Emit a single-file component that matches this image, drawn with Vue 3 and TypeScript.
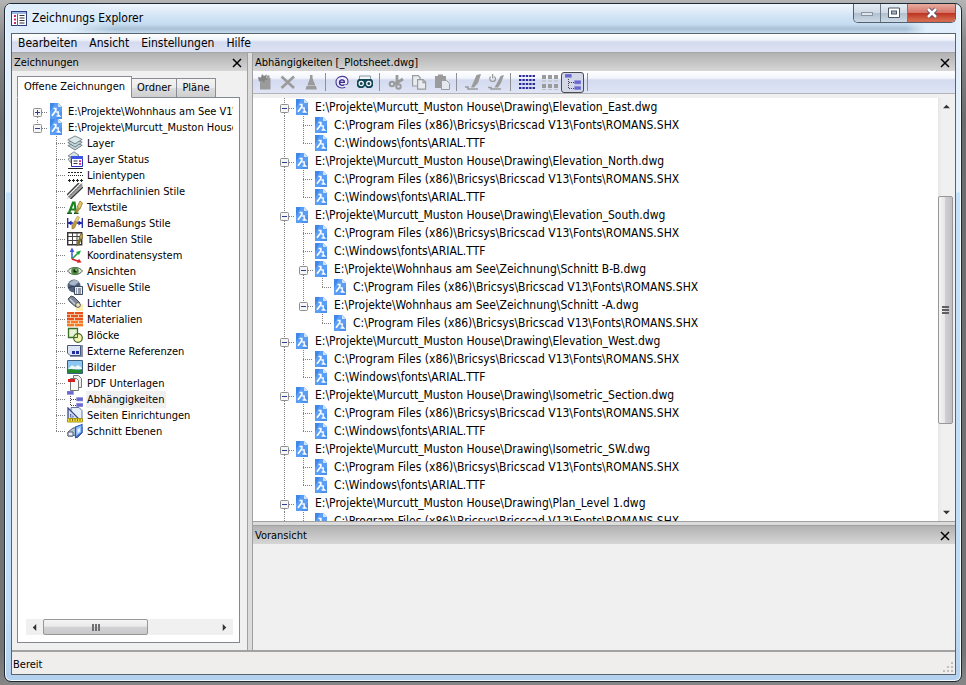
<script setup lang="ts">
type Cell = 'none' | 'line' | 'tee' | 'elbow' | 'box' | 'boxLast' | 'plusTop'

interface Row {
  text: string
  cells: Cell[]
  icon: string
  selected?: boolean
}

interface Tool {
  icon: string
  label: string
}

const menus: string[] = ['Bearbeiten', 'Ansicht', 'Einstellungen', 'Hilfe']
const tabs: string[] = ['Offene Zeichnungen', 'Ordner', 'Pläne']

const categories: [string, string][] = [
  ['Layer', 'layer'],
  ['Layer Status', 'layerState'],
  ['Linientypen', 'linetype'],
  ['Mehrfachlinien Stile', 'multiline'],
  ['Textstile', 'textstyle'],
  ['Bemaßungs Stile', 'dimension'],
  ['Tabellen Stile', 'table'],
  ['Koordinatensystem', 'ucs'],
  ['Ansichten', 'eye'],
  ['Visuelle Stile', 'visual'],
  ['Lichter', 'light'],
  ['Materialien', 'material'],
  ['Blöcke', 'block'],
  ['Externe Referenzen', 'xref'],
  ['Bilder', 'image'],
  ['PDF Unterlagen', 'pdf'],
  ['Abhängigkeiten', 'deps'],
  ['Seiten Einrichtungen', 'page'],
  ['Schnitt Ebenen', 'section'],
]

const drawingRows: Row[] = [
  { text: 'E:\\Projekte\\Wohnhaus am See V1\\', cells: ['plusTop'], icon: 'dwg' },
  { text: 'E:\\Projekte\\Murcutt_Muston House\\', cells: ['boxLast'], icon: 'dwg' },
  ...categories.map(([text, icon], i): Row => ({
    text,
    icon,
    cells: ['none', i === categories.length - 1 ? 'elbow' : 'tee'],
    selected: icon === 'deps',
  })),
]

const ROMANS = 'C:\\Program Files (x86)\\Bricsys\\Bricscad V13\\Fonts\\ROMANS.SHX'
const ARIAL = 'C:\\Windows\\fonts\\ARIAL.TTF'
const HOUSE = 'E:\\Projekte\\Murcutt_Muston House\\Drawing\\'
const LAKE = 'E:\\Projekte\\Wohnhaus am See\\Zeichnung\\'

const dependencies: { file: string; refs: string[] }[] = [
  { file: 'Elevation_East.dwg', refs: [] },
  { file: 'Elevation_North.dwg', refs: [] },
  { file: 'Elevation_South.dwg', refs: ['Schnitt B-B.dwg', 'Schnitt -A.dwg'] },
  { file: 'Elevation_West.dwg', refs: [] },
  { file: 'Isometric_Section.dwg', refs: [] },
  { file: 'Isometric_SW.dwg', refs: [] },
  { file: 'Plan_Level 1.dwg', refs: [] },
]

const dependencyRows: Row[] = dependencies
  .flatMap(({ file, refs }): Row[] => [
    { text: HOUSE + file, cells: ['box'], icon: 'dwg' },
    { text: ROMANS, cells: ['line', 'tee'], icon: 'dwg' },
    { text: ARIAL, cells: ['line', refs.length ? 'tee' : 'elbow'], icon: 'dwg' },
    ...refs.flatMap((ref, i): Row[] => {
      const last = i === refs.length - 1
      return [
        { text: LAKE + ref, cells: ['line', last ? 'boxLast' : 'box'], icon: 'dwg' },
        { text: ROMANS, cells: ['line', last ? 'none' : 'line', 'elbow'], icon: 'dwg' },
      ]
    }),
  ])

const linePaths: Record<Cell, string> = {
  none: '',
  line: 'M9.5 0V18',
  tee: 'M9.5 0V18M9 9.5H19',
  elbow: 'M9.5 0V10M9 9.5H19',
  box: 'M9.5 0V5M9.5 15V18M14 10.5H19',
  boxLast: 'M9.5 0V5M14 10.5H19',
  plusTop: 'M9.5 15V18M14 10.5H19',
}
const isBox = (c: Cell): boolean => c === 'box' || c === 'boxLast' || c === 'plusTop'

const blue = '#2a2a9c'
const grey = '#9b9b9b'
const brush = '<path d="M10 9 8 12l1 2 2-1 2-3z" fill="#a88d3a"/><path d="M10 8l3 2 2.500-6L13 2z" fill="#e5c766" stroke="#7d6420" stroke-width=".7"/>'

const icons: Record<string, string> = {
  dwg: '<path d="M2 0h8.500L14 3.500V16H2z" fill="#5a9ff5"/><path d="M2 0h5L2 9z" fill="#3f88ea"/><path d="M14 8v8H7z" fill="#3f88ea" opacity=".6"/><path d="M10 0v4h4z" fill="#cfe3fb"/><path d="M10.500 0 14 3.500V0z" fill="#fff"/><path d="M5.500 5.500h2.300v2.300L4 12.800" fill="none" stroke="#fff" stroke-width="1.700"/><path d="M8.200 9h2v2.500l1.600 1.500H8.600" fill="none" stroke="#fff" stroke-width="1.300"/>',
  layer: '<g fill="#c3d6da" stroke="#5d6c70" stroke-width=".8"><path d="M.8 10.500 9 8l6.200 2.200L8 15z"/><path d="M.8 7.500 8 4.500l7.200 2.700L8 12z"/><path d="M.8 4.800 8 1l7.200 3.400L8 8.800z" fill="#dbe9ec"/></g>',
  layerState: '<g fill="#d5e3e6" stroke="#6c7a7e" stroke-width=".8"><path d="M1 8l3-2v6z"/><path d="M1 5 7 .8l5 3.400-5 3z"/></g><path d="M4.500 5.500h11v10h-11z" fill="#fff" stroke="#2233c4"/><path d="M4 5h12v3H4z" fill="#3e55e8"/><path d="M6.500 10h4M6.500 12.500h4" stroke="#334" stroke-width="1.200"/><path d="M12 9.300h2v1.700h-2zM12 12h2v1.700h-2z" fill="#e11c8c"/>',
  linetype: '<g stroke="#222" stroke-width="1" fill="none"><path d="M1 1.500h15"/><path d="M1 5.500h15" stroke-dasharray="2 1"/><path d="M1 8.500h15" stroke-dasharray="1 1"/><path d="M1 13.500h15" stroke-dasharray="3 1"/><path d="M2.500 12v3M6.500 12v3M10.500 12v3M14.500 12v3"/></g>',
  multiline: '<g stroke="#3d3d3d" stroke-width="1.500" fill="none"><path d="M0 12 12 0"/><path d="M2 14.500 15 1.500" stroke="#9a9a9a" stroke-width="2.600"/><path d="M3.500 16 16 4"/></g><path d="M0 15.500 15.500 0" stroke="#444" stroke-dasharray="1 1.500"/>',
  textstyle: '<path d="M2 14 6 3.500l1.500 0L9 14M3.500 10.500h5" fill="none" stroke="#1c8220" stroke-width="2.200"/><path d="M0 14.300h5M7 14.300h4.500" stroke="#155f18" stroke-width="1.500"/>' + brush,
  dimension: '<path d="M.7 3v10M15.300 3v10M1 8h5M10 8h5" stroke="#1b23a8" stroke-width="1.300"/><path d="M1 8l3.500-2.500v5zM15 8l-3.500-2.500v5z" fill="#1b23a8"/><path d="M5 11l2.500-5L10 7.500 7.500 13 5 14z" fill="#c49d3c" stroke="#7d6420" stroke-width=".6"/><path d="M8 5.500 10.500 1l2 1.500L10 7z" fill="#f0d678" stroke="#9d8430" stroke-width=".6"/>',
  table: '<path d="M.7 1.700h14v12h-14z" fill="#fff" stroke="#333" stroke-width="1.400"/><path d="M1 5.500h14M1 9.500h14M5.500 2v12M10 2v12" stroke="#444"/><path d="M10 12l2-5 2.500 1.500-2 5-3 2z" fill="#7d6d2b"/><path d="M12 7l2-4.500 2 1V6l-1.500 2.500z" fill="#b8a257" stroke="#574a1c" stroke-width=".7"/>',
  ucs: '<path d="M5 12V4" stroke="#4353e0" stroke-width="1.500"/><path d="M5 .5 2.600 5h4.800z" fill="#4353e0"/><path d="M5 12l6-6" stroke="#18a83a" stroke-width="1.500"/><path d="M14 3.500 9 5l3 3z" fill="#18a83a"/><path d="M5 12l7 2.500" stroke="#d8202a" stroke-width="1.800"/><path d="M14.500 15.500l-4.500.3 2-4z" fill="#d8202a"/>',
  eye: '<path d="M.5 8C4 3.200 12 3.200 15.500 8 12 12.800 4 12.800.5 8z" fill="#e3eadd" stroke="#58604f"/><circle cx="8" cy="8" r="3.800" fill="#4f8f3f"/><circle cx="8" cy="8" r="1.700" fill="#16270f"/><circle cx="9" cy="7" r=".8" fill="#fff"/>',
  visual: '<circle cx="7" cy="7" r="6.500" fill="#51607a"/><path d="M2 5c2-5 8-5 10-2L7 7z" fill="#a9b5c9"/><path d="M1 9l6-2 4 6" stroke="#323d52" fill="none"/><path d="M7.500 7.500h8v8h-8z" fill="#e7eef8" stroke="#3a475d"/><path d="M9 10h1M11 10h3M9 12h1M11 12h3M9 14h1M11 14h3" stroke="#3a475d"/>',
  light: '<path d="M9 9h7v7H9z" fill="#fdeeb5"/><path d="M1 4 4 1l3 1 6 6-4 4-6-5z" fill="#7d8797" stroke="#444c59"/><path d="M3 4l6 6" stroke="#c4ccd8" stroke-width="1.500"/><circle cx="11" cy="10" r="2.400" fill="#f1e7be" stroke="#545b66"/>',
  material: '<path d="M0 1h16v14.500H0z" fill="#f6d6b4"/><g fill="#e8501c"><path d="M0 1h7v2.200H0zM8 1h8v2.200H8zM0 4h3v2.200H0zM4 4h7v2.200H4zM12 4h4v2.200h-4zM0 7h7v2.200H0zM8 7h8v2.200H8z"/><path d="M0 10h3v2.200H0zM4 10h7v2.200H4zM12 10h4v2.200h-4zM0 13h7v2.300H0zM8 13h8v2.300H8z" fill="#f57a22"/></g>',
  block: '<path d="M1.500 1.500h9v9h-9z" fill="#e8f3d5" stroke="#3c6e2b" stroke-width="1.300"/><circle cx="11" cy="11" r="4.300" fill="#f2f0a0" fill-opacity=".8" stroke="#3f6426" stroke-width="1.200"/><path d="M6 10.500h4.500V6" fill="none" stroke="#3c6e2b"/>',
  xref: '<path d="M3 2h13v12H3z" fill="#8a93a8"/><path d="M.5 2.500h13v10H3l-2.500-2.500z" fill="#dde5f5" stroke="#4b587c"/><path d="M5 8h3v3H5zM9 8h3v3H9z" fill="#22309f"/>',
  image: '<path d="M.5 1.500h15v13H.5z" fill="#8cc6f1" stroke="#3b5f80"/><path d="M1 10l4-4 3 2 3-2 4 3v1H1z" fill="#eef7f4"/><path d="M1 10.500c4-2 9 2 14-.5v4H1z" fill="#238a2b"/>',
  pdf: '<path d="M6.500 .5h5l3 3v9h-8z" fill="#eee" stroke="#777"/><path d="M3.500 3.500h6l2 2v10h-8z" fill="#f7f7f7" stroke="#777"/><path d="M1 4h7v3H1z" fill="#d41f1f"/>',
  deps: '<path d="M3.500 5v10M4 8.500h5M4 14.500h5" stroke="#444" fill="none" stroke-dasharray="1 1"/><g fill="#6868cf" stroke="#9494e0" stroke-width=".6"><path d="M0 0h6.500v3.500H0zM9.500 6.500H16V10H9.500zM9.500 12.300H16v3.500H9.500z"/></g>',
  page: '<path d="M4 .5h8l3 3V13H4z" fill="#e6eefa" stroke="#68779a"/><path d="M1 1v11h11z" fill="#d4e1f8" stroke="#3a4988" stroke-width="1.300"/><path d="M3.500 7v3h3z" fill="#fff" stroke="#3a4988" stroke-width=".7"/><path d="M.5 11.500h15v3.500H.5z" fill="#f4e13b" stroke="#a6951c"/><path d="M3 12v2M5.500 12v2M8 12v2M10.500 12v2M13 12v2" stroke="#7c6e10"/>',
  section: '<path d="M1 9l5-4 9-1v6l-5 5-2-3-3 1H1z" fill="#b6c3d3" stroke="#526074"/><path d="M1 9h5v4H1z" fill="#e9eff6" stroke="#526074"/><path d="M8.500 4 15 1.500v8l-6.500 5z" fill="#8fc0ff" stroke="#2c56c4" stroke-width="1.200"/><path d="M10.500 6 13 5v3.500l-2.500 2z" fill="#e6f1ff"/>',
  newDoc: `<path d="M3 4h10.500v11.500H3z" fill="${grey}"/><path d="M1 3l3 .5L5 0l2 2 3-1.500-1 3 2 2-3 .5-1 3-2-2.500-3 1z" fill="#858585"/><path d="M9.500 1.500h3V4h-3z" fill="${grey}"/>`,
  cross: `<path d="M1.500 2.500 14 14M14 2.500 1.500 14" stroke="${grey}" stroke-width="2.600"/>`,
  cone: `<path d="M7 1h2.500v3l2.500 7H4.500L7 4zM3.500 12h9.500l1 3.500H2.500z" fill="${grey}"/><path d="M5 10.500h7" stroke="${grey}" stroke-width="2"/>`,
  at: '<circle cx="8" cy="8" r="6.200" fill="#f1f0ff" opacity=".7"/><path d="M5.600 8.400h4.800c.3-3.200-4.500-3.600-4.900-.4-.4 3.300 3.400 4.200 5 2.300" fill="none" stroke="#3a2a8c" stroke-width="1.300"/><path d="M11.300 13.300C7 15.300 2 13 2 8.200c0-7.400 12-8 12-.6 0 2-1 3.400-2.600 3.200" fill="none" stroke="#4a3c96" stroke-width="1.100"/>',
  binoculars: '<path d="M2.500 2h11v4h-11z" fill="#f5f5f5" stroke="#8a99a3"/><path d="M1.500 5h13L16 7v5l-2 2h-4l-2-2-2 2H2l-2-2V7z" fill="#13485a"/><circle cx="4.200" cy="9.500" r="2.100" fill="#13485a" stroke="#fff" stroke-width="1.200"/><circle cx="11.800" cy="9.500" r="2.100" fill="#13485a" stroke="#fff" stroke-width="1.200"/>',
  cut: `<path d="M9 1v8M15 5 7 10" stroke="${grey}" stroke-width="2.800"/><circle cx="4" cy="10" r="2.300" fill="none" stroke="${grey}" stroke-width="2"/><circle cx="10.500" cy="12.500" r="2.200" fill="none" stroke="${grey}" stroke-width="2"/>`,
  copy: `<g fill="#e9ebf3" stroke="${grey}" stroke-width="1.200"><path d="M1.600 1.600h5.500l2 2V12H1.600z"/><path d="M6.600 5.600h5.500l2.500 2.500v7h-8z"/><path d="M12 5.600v3h3" fill="none"/></g>`,
  paste: `<path d="M1 2h3V.5h5V2h3v12H1z" fill="${grey}"/><path d="M7.500 6.500h5l3 3v6h-8z" fill="#e6e8f0" stroke="${grey}"/>`,
  sweep: `<path d="M11.500 1 16 0l-3 9-4 4.500H6L8 9z" fill="${grey}"/><path d="M0 13h3v2h10" fill="none" stroke="${grey}" stroke-width="1.600"/>`,
  sweepPower: `<path d="M12.500 2 16 1l-3 8-3 4.500H6.500L9 9z" fill="${grey}"/><path d="M0 13.500h3V15h10" fill="none" stroke="${grey}" stroke-width="1.600"/><path d="M2.500 2.500C-1 8 8 9 7.500 5 7.500 4 7 3 6 2.500M4.600 0v4.500" fill="none" stroke="${grey}" stroke-width="1.300"/>`,
  list: `<g stroke="${blue}" stroke-width="1.800"><path d="M0 2h16M0 6h16M0 10h16M0 14h16" stroke-dasharray="2.400 1"/></g>`,
  grid: `<g fill="${grey}"><path d="M0 1h4v4H0zM6 1h4v4H6zM12 1h4v4h-4zM0 10h4v4H0zM6 10h4v4H6zM12 10h4v4h-4z"/></g><path d="M0 7h4M6 7h4M12 7h4M0 15.700h4M6 15.700h4M12 15.700h4" stroke="#bbb"/>`,
}

const toolbar: Tool[][] = [
  [
    { icon: 'newDoc', label: 'Neu' },
    { icon: 'cross', label: 'Löschen' },
    { icon: 'cone', label: 'Bereinigen' },
  ],
  [
    { icon: 'at', label: 'E-Mail' },
    { icon: 'binoculars', label: 'Suchen' },
  ],
  [
    { icon: 'cut', label: 'Ausschneiden' },
    { icon: 'copy', label: 'Kopieren' },
    { icon: 'paste', label: 'Einfügen' },
  ],
  [
    { icon: 'sweep', label: 'Regenerieren' },
    { icon: 'sweepPower', label: 'Automatisch regenerieren' },
  ],
  [
    { icon: 'list', label: 'Detailansicht' },
    { icon: 'grid', label: 'Symbolansicht' },
    { icon: 'deps', label: 'Baumansicht' },
  ],
]
</script>

<template>
  <div class="desktop">
    <div class="window">
      <header class="titlebar">
        <svg class="app-icon" viewBox="0 0 16 16" aria-hidden="true">
          <rect x=".5" y=".5" width="15" height="14" fill="#fff" stroke="#2b3f7c" />
          <rect x="1" y="1" width="14" height="2" fill="#9db8e4" />
          <path d="M6.500 3v12" stroke="#53648f" />
          <path d="M3 4h2v2H3zM3 7.500h2v2H3zM3 11h2v2H3z" fill="#d0286e" />
          <path d="M8.500 4.500h5M8.500 7h5M8.500 9.500h5M8.500 12h5" stroke="#333" />
        </svg>
        <h1>Zeichnungs Explorer</h1>
        <div class="caption-buttons">
          <button class="min" aria-label="Minimieren">
            <svg viewBox="0 0 12 12"><rect x=".5" y="5.500" width="11" height="3" fill="#dfe5eb" stroke="#8995a2" /></svg>
          </button>
          <button class="max" aria-label="Maximieren">
            <svg viewBox="0 0 12 12"><path d="M.5 1h11v9.500H.5z" fill="#fff" stroke="#4a5667" /><rect x="3.500" y="4" width="5" height="3" fill="#aab8c8" stroke="#4a5667" /></svg>
          </button>
          <button class="exit" aria-label="Schließen">
            <svg viewBox="0 0 12 12"><path d="M2 2l8 8M10 2l-8 8" stroke="#54465a" stroke-width="4.400" /><path d="M2 2l8 8M10 2l-8 8" stroke="#fff" stroke-width="2.600" /></svg>
          </button>
        </div>
      </header>

      <div class="client">
        <nav class="menubar">
          <button v-for="m in menus" :key="m">{{ m }}</button>
        </nav>

        <div class="workspace">
          <section class="drawings">
            <div class="caption">
              <h2>Zeichnungen</h2>
              <button aria-label="Schließen"><svg viewBox="0 0 10 10"><path d="M1 1l8 8M9 1 1 9" stroke="#000" stroke-width="1.500" /></svg></button>
            </div>
            <div class="tabs" role="tablist">
              <button v-for="(t, i) in tabs" :key="t" role="tab" :aria-selected="i === 0" :class="{ active: i === 0 }">{{ t }}</button>
            </div>
            <div class="tab-page">
              <ul class="tree small">
                <li v-for="(r, i) in drawingRows" :key="i">
                  <svg v-for="(c, j) in r.cells" :key="j" class="cell" viewBox="0 1 19 16" aria-hidden="true">
                    <path :d="linePaths[c]" stroke="#808080" stroke-dasharray="1 1" fill="none" />
                    <g v-if="isBox(c)">
                      <rect x="5.500" y="6.500" width="8" height="8" rx="1" fill="#f6f6f6" stroke="#8e8e8e" />
                      <path :d="c === 'plusTop' ? 'M7 10.500h5M9.500 8v5' : 'M7 10.500h5'" stroke="#2a3f8f" />
                    </g>
                  </svg>
                  <svg class="icon" viewBox="0 0 16 16" aria-hidden="true" v-html="icons[r.icon]"></svg>
                  <span :class="{ selected: r.selected }">{{ r.text }}</span>
                </li>
              </ul>
              <div class="hscroll">
                <button aria-label="Nach links"><svg viewBox="0 0 8 8"><path d="M6 0v8L2 4z" fill="#333" /></svg></button>
                <div class="hthumb"><i></i><i></i><i></i></div>
                <div class="hrest"></div>
                <button aria-label="Nach rechts"><svg viewBox="0 0 8 8"><path d="M2 0v8l4-4z" fill="#333" /></svg></button>
              </div>
            </div>
          </section>

          <div class="splitter"></div>

          <div class="main">
            <section class="dependencies">
              <div class="caption">
                <h2>Abhängigkeiten [_Plotsheet.dwg]</h2>
                <button aria-label="Schließen"><svg viewBox="0 0 10 10"><path d="M1 1l8 8M9 1 1 9" stroke="#000" stroke-width="1.500" /></svg></button>
              </div>
              <div class="toolbar" role="toolbar">
                <div v-for="(group, g) in toolbar" :key="g" class="group">
                  <button v-for="tool in group" :key="tool.icon" :class="{ pressed: tool.icon === 'deps' }" :aria-label="tool.label">
                    <svg viewBox="0 0 16 16" v-html="icons[tool.icon]"></svg>
                  </button>
                </div>
              </div>
              <div class="view">
                <ul class="tree large">
                  <li v-for="(r, i) in dependencyRows" :key="i">
                    <svg v-for="(c, j) in r.cells" :key="j" class="cell" viewBox="0 0 19 18" aria-hidden="true">
                      <path :d="linePaths[c]" stroke="#808080" stroke-dasharray="1 1" fill="none" />
                      <g v-if="isBox(c)">
                        <rect x="5.500" y="6.500" width="8" height="8" rx="1" fill="#f6f6f6" stroke="#8e8e8e" />
                        <path d="M7 10.500h5" stroke="#2a3f8f" />
                      </g>
                    </svg>
                    <svg class="icon" viewBox="0 0 16 16" aria-hidden="true" v-html="icons[r.icon]"></svg>
                    <span>{{ r.text }}</span>
                  </li>
                </ul>
                <div class="vscroll">
                  <button aria-label="Nach oben"><svg viewBox="0 0 8 8"><path d="M0 6h8L4 2z" fill="#333" /></svg></button>
                  <div class="vbefore"></div>
                  <div class="vthumb"><i></i><i></i><i></i></div>
                  <div class="vafter"></div>
                  <button aria-label="Nach unten"><svg viewBox="0 0 8 8"><path d="M0 2h8L4 6z" fill="#333" /></svg></button>
                </div>
              </div>
            </section>
            <div class="row-splitter"></div>
            <section class="preview">
              <div class="caption">
                <h2>Voransicht</h2>
                <button aria-label="Schließen"><svg viewBox="0 0 10 10"><path d="M1 1l8 8M9 1 1 9" stroke="#000" stroke-width="1.500" /></svg></button>
              </div>
            </section>
          </div>
        </div>

        <footer class="status">
          <span>Bereit</span>
          <svg viewBox="0 0 12 12" aria-hidden="true"><path d="M9 1h2v2H9zM5 5h2v2H5zM9 5h2v2H9zM1 9h2v2H1zM5 9h2v2H5zM9 9h2v2H9z" fill="#c3bfbf" /></svg>
        </footer>
      </div>
    </div>
  </div>
</template>

<style>
body {
  margin: 0;
}
</style>

<style scoped>
* {
  box-sizing: border-box;
}
.desktop {
  height: 100vh;
  min-height: 480px;
  padding: 3px 4px;
  background: linear-gradient(#b4b4b4, #8a8a8a 40px, #6c6c6c 120px, #747474 95%, #868686);
  font: 11px/16px "DejaVu Sans Condensed", "DejaVu Sans", sans-serif;
  color: #000;
}
button {
  margin: 0;
  padding: 0;
  border: 0;
  background: none;
  font: inherit;
  color: inherit;
}
svg {
  display: block;
  flex: none;
}
h1,
h2 {
  margin: 0;
  font: inherit;
}
.window {
  display: flex;
  flex-direction: column;
  height: 100%;
  padding: 0 5px 6px 6px;
  border: 1px solid #1d2a35;
  border-radius: 7px;
  background: linear-gradient(#e3f0fc, #e3f1fd 188px, #c6e1fb 189px, #c0dcf8 90%, #b3d1ee);
  box-shadow: inset 0 0 0 1px #f4fafe;
  overflow: hidden;
}
.titlebar {
  flex: none;
  display: flex;
  align-items: flex-start;
  height: 29px;
  margin-left: -5px;
  padding-left: 5px;
  background: linear-gradient(90deg, #e0eefb 0, #e0eefb 60px, transparent 110px, transparent calc(100% - 50px), #e0eefb calc(100% - 30px)),
    linear-gradient(#f0f6fd, #cfe2f5 14px, #c6dcf0 20px, #a9c0d5 25px, #c6dcef);
}
.app-icon {
  width: 16px;
  height: 16px;
  margin-top: 7px;
}
.titlebar h1 {
  flex: 1;
  margin: 6px 0 0 5px;
  font-size: 12px;
}
.caption-buttons {
  display: flex;
  height: 19px;
  border: 1px solid #52606e;
  border-top: 0;
  border-radius: 0 0 5px 5px;
  overflow: hidden;
}
.caption-buttons button {
  display: grid;
  place-items: center;
  width: 27px;
  border-right: 1px solid #6b7986;
  background: linear-gradient(#e6edf4, #d0dae5 48%, #b1bfce 50%, #cdd9e6);
}
.caption-buttons .exit {
  width: 47px;
  border: 0;
  background: linear-gradient(#e9ada0, #d4766a 48%, #bc3220 50%, #d4684c 90%);
}
.caption-buttons svg {
  width: 12px;
  height: 12px;
}
.client {
  flex: 1;
  min-height: 0;
  display: flex;
  flex-direction: column;
  border: 1px solid #59636e;
  background: #f0f0f0;
}
.menubar {
  flex: none;
  display: flex;
  height: 19px;
  border-bottom: 1px solid #a5a5ac;
  background: linear-gradient(#fff, #f0f3fa 6px, #d5dbef 8px, #dde3f4);
  font-size: 12px;
}
.menubar button {
  padding: 0 6px;
}
.workspace {
  flex: 1;
  min-height: 0;
  display: flex;
  border-bottom: 2px solid #a2a2a2;
}
.drawings {
  flex: none;
  width: 235px;
  display: flex;
  flex-direction: column;
}
.caption {
  flex: none;
  display: flex;
  align-items: center;
  justify-content: space-between;
  height: 18px;
  padding: 1px 5px 0 2px;
  background: linear-gradient(#b2b2b2, #d6d6d6);
}
.caption svg {
  width: 10px;
  height: 10px;
}
.tabs {
  flex: none;
  display: flex;
  align-items: flex-end;
  margin: 5px 7px -1px 5px;
}
.tabs button {
  height: 20px;
  padding: 0 5px;
  border: 1px solid #898c95;
  border-left-width: 0;
  background: linear-gradient(#f3f3f3, #ebebeb 48%, #dcdcdc 52%, #cfcfcf);
}
.tabs .active {
  z-index: 1;
  height: 22px;
  padding: 0 6px;
  border-left-width: 1px;
  border-bottom-color: #fff;
  background: #fff;
}
.tab-page {
  flex: 1;
  min-height: 0;
  display: flex;
  flex-direction: column;
  margin: 0 7px 7px 5px;
  padding: 5px 6px 7px 8px;
  border: 1px solid #828790;
  background: #fff;
}
.tree {
  flex: 1;
  min-width: 0;
  min-height: 0;
  margin: 0;
  padding: 0;
  list-style: none;
  overflow: hidden;
}
.tree li {
  display: flex;
  align-items: center;
  white-space: nowrap;
}
.cell {
  width: 19px;
}
.icon {
  width: 16px;
  height: 16px;
}
.small {
  padding-left: 2px;
}
.small li {
  height: 16px;
}
.small .cell {
  height: 16px;
}
.small .icon {
  margin: 0 3px 0 1px;
}
.small span {
  padding: 1px 2px 0 1px;
}
.small .selected {
  background: #f0f0f0;
}
.large {
  padding-left: 22px;
  font-size: 12px;
}
.large li {
  height: 18px;
}
.large .cell {
  height: 18px;
}
.large .icon {
  margin-right: 5px;
}
.hscroll {
  flex: none;
  display: flex;
  height: 16px;
  background: #f0f0f0;
}
.hscroll button,
.vscroll button {
  display: grid;
  place-items: center;
  flex: none;
  width: 17px;
  height: 17px;
}
.hscroll button svg,
.vscroll button svg {
  width: 7px;
  height: 7px;
}
.hthumb,
.vthumb {
  display: flex;
  align-items: center;
  justify-content: center;
  gap: 1px;
  border: 1px solid #979797;
  border-radius: 2px;
}
.hthumb {
  flex: 104;
  background: linear-gradient(#f5f5f5, #e9e9e9 45%, #d2d2d5 50%, #c9c9cc);
}
.hthumb i {
  width: 2px;
  height: 7px;
  background: #707070;
}
.hrest {
  flex: 68;
}
.splitter {
  flex: none;
  width: 6px;
  border: 1px solid #a0a0a0;
  border-width: 0 1px;
  background: #dcdcdc;
}
.main {
  flex: 1;
  min-width: 0;
  display: flex;
  flex-direction: column;
}
.dependencies {
  flex: 468;
  min-height: 0;
  display: flex;
  flex-direction: column;
}
.toolbar {
  flex: none;
  display: flex;
  height: 23px;
  border-bottom: 1px solid #b3b3bb;
  background: linear-gradient(#fff, #f2f5fb 7px, #d4daef 9px, #dfe5f5);
}
.group {
  display: flex;
  align-items: center;
  padding-right: 8px;
}
.group::after {
  content: "";
  width: 1px;
  height: 18px;
  margin: 0 -4px 0 3px;
  background: #8f8f96;
}
.toolbar button {
  display: grid;
  place-items: center;
  width: 23px;
  height: 21px;
}
.toolbar button svg {
  width: 16px;
  height: 16px;
}
.toolbar .pressed {
  border: 1px solid #4a4a50;
  border-radius: 3px;
  background: #d3d8e8;
}
.view {
  flex: 1;
  min-height: 0;
  display: flex;
  border-top: 4px solid #f0f0f0;
  background: #fff;
}
.vscroll {
  flex: none;
  display: flex;
  flex-direction: column;
  width: 17px;
  background: linear-gradient(90deg, #e6e6e6, #f0f0f0 4px);
}
.vbefore {
  flex: 81;
}
.vthumb {
  flex: 228;
  flex-direction: column;
  width: 15px;
  background: linear-gradient(90deg, #f5f5f5, #e6e6e8 45%, #d0d0d4 50%, #bfbfc4);
}
.vthumb i {
  width: 7px;
  height: 2px;
  background: #606060;
}
.vafter {
  flex: 80;
}
.row-splitter {
  flex: none;
  height: 5px;
  border-top: 1px solid #a0a0a0;
  border-bottom: 1px solid #a0a0a0;
  background: #dcdcdc;
}
.preview {
  flex: 124;
}
.status {
  flex: none;
  display: flex;
  align-items: flex-end;
  justify-content: space-between;
  height: 22px;
  padding: 0 1px 1px 1px;
  background: #f0eded;
}
.status svg {
  width: 12px;
  height: 12px;
}
</style>
